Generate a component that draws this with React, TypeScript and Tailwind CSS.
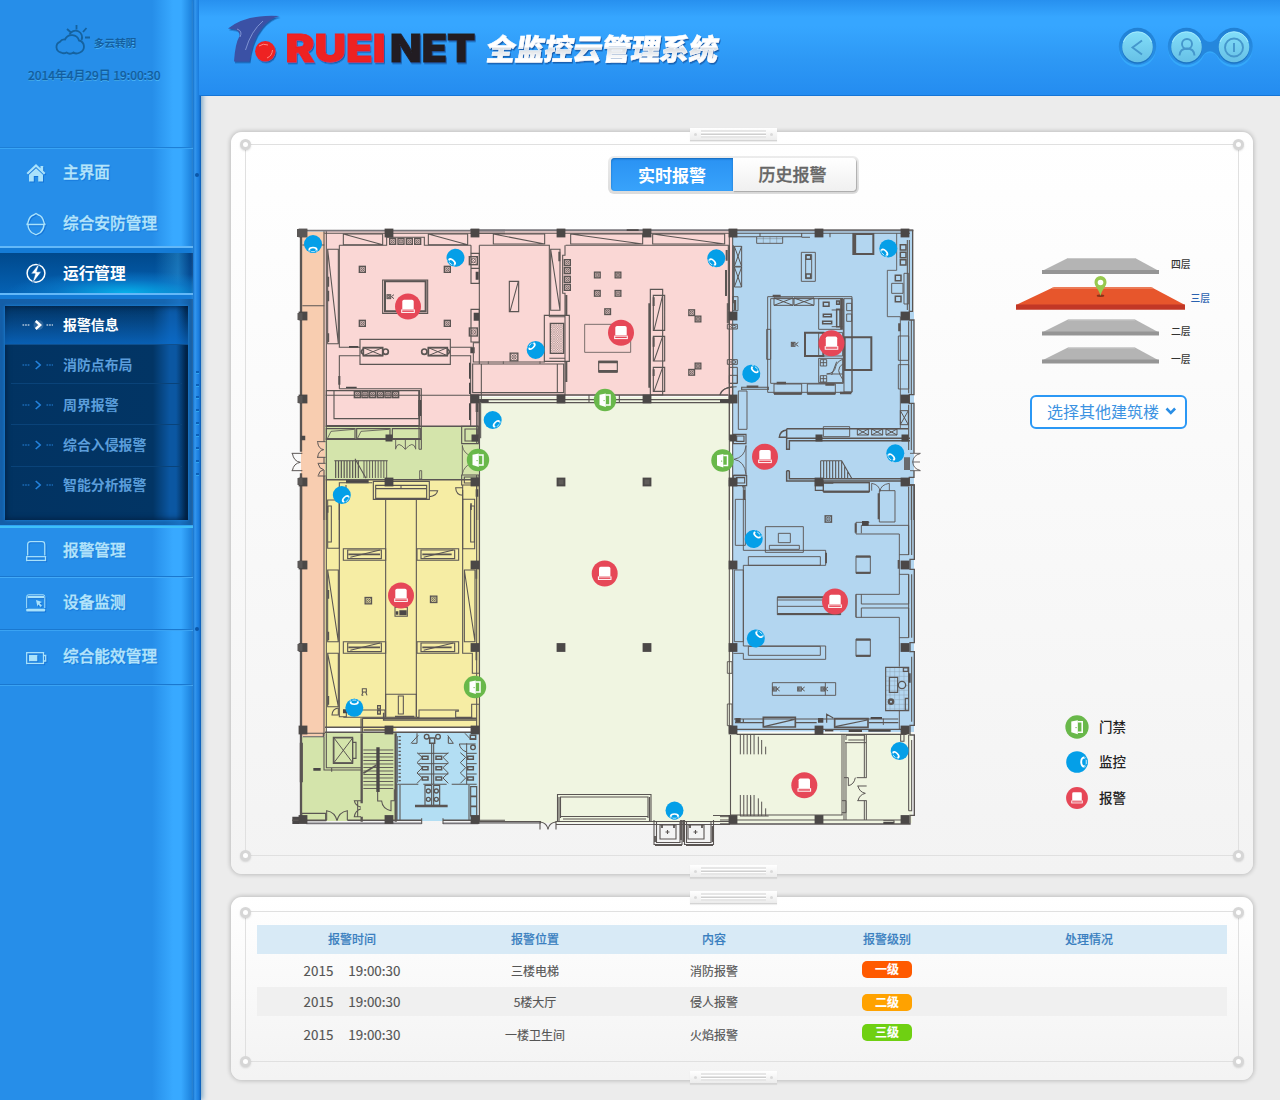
import React from "react";

type Box = [number, number, number, number];
type Mark = [number, number, number];

const INK = "#5a5553";

/* ---------- small drawing helpers for the floor plan ---------- */

function Boxes({ items, w = 3.4, fill = "none" }: { items: Box[]; w?: number; fill?: string }) {
  return (
    <path
      d={items.map(([x, y, a, b]) => `M${x} ${y}h${a}v${b}h${-a}z`).join("")}
      stroke={INK}
      strokeWidth={w}
      fill={fill}
    />
  );
}

function Crossed({ items }: { items: Box[] }) {
  return (
    <path
      d={items.map(([x, y, a, b]) => `M${x} ${y}h${a}v${b}h${-a}zl${a} ${b}M${x + a} ${y}l${-a} ${b}`).join("")}
      stroke={INK}
      strokeWidth={3}
      fill="none"
    />
  );
}

function Slashed({ items }: { items: Box[] }) {
  return (
    <path
      d={items.map(([x, y, a, b]) => `M${x} ${y}h${a}v${b}h${-a}zl${a} ${b}`).join("")}
      stroke={INK}
      strokeWidth={3.2}
      fill="none"
    />
  );
}

function Pots({ items }: { items: Mark[] }) {
  return (
    <g stroke={INK} fill="none">
      {items.map(([x, y, s], i) => (
        <g key={i}>
          <rect x={x - s / 2} y={y - s / 2} width={s} height={s} strokeWidth={4} />
          <circle cx={x} cy={y} r={s / 3.6} strokeWidth={2.4} />
          <path d={`M${x - s / 2} ${y - s / 2}l${s} ${s}M${x + s / 2} ${y - s / 2}l${-s} ${s}`} strokeWidth={1.6} />
        </g>
      ))}
    </g>
  );
}

function Solid({ items }: { items: Box[] }) {
  return <path d={items.map(([x, y, a, b]) => `M${x} ${y}h${a}v${b}h${-a}z`).join("")} fill="#4a4747" />;
}

function Line({ d, w = 3.2, c = INK }: { d: string; w?: number; c?: string }) {
  return <path d={d} stroke={c} strokeWidth={w} fill="none" />;
}

function bars(x0: number, x1: number, step: number, y0: number, y1: number) {
  let d = "";
  for (let x = x0; x <= x1; x += step) d += `M${x} ${y0}V${y1}`;
  return d;
}
function rungs(y0: number, y1: number, step: number, x0: number, x1: number) {
  let d = "";
  for (let y = y0; y <= y1; y += step) d += `M${x0} ${y}H${x1}`;
  return d;
}

function Cam({ x, y }: { x: number; y: number }) {
  return (
    <g stroke={INK} strokeWidth={3} fill="none">
      <rect x={x - 8} y={y - 6} width={11} height={12} />
      <rect x={x - 5} y={y - 3} width={4} height={6} />
      <path d={`M${x + 13} ${y - 6}l-8 6l8 6`} />
    </g>
  );
}

/* ---------- markers ---------- */

function Alarm({ x, y, s = 1 }: { x: number; y: number; s?: number }) {
  return (
    <g transform={`translate(${x} ${y}) scale(${s})`}>
      <circle r="13" fill="#e64757" />
      <path d="M-5.700 2.600V-5q0-1.700 1.700-1.700H4Q5.700-6.700 5.700-5V2.600Z" fill="#fff" />
      <rect x="-6.300" y="3.400" width="12.600" height="2.500" fill="none" stroke="#fff" strokeWidth="1" />
    </g>
  );
}

function Door({ x, y, s = 1 }: { x: number; y: number; s?: number }) {
  return (
    <g transform={`translate(${x} ${y}) scale(${s})`}>
      <circle r="11.200" fill="#69b84a" />
      <path d="M-5.500-5.200L.8-6.500V7L-5.500 5Z" fill="#fff" />
      <path d="M.8-5H5V5H.8" fill="none" stroke="#fff" strokeWidth="1.500" />
      <circle cx="-.9" cy=".6" r=".7" fill="#69b84a" />
    </g>
  );
}

function Eye({ x, y, a, s = 1 }: { x: number; y: number; a: number; s?: number }) {
  return (
    <g transform={`translate(${x} ${y}) rotate(${a}) scale(${s})`}>
      <circle r="9" fill="#049fe8" />
      <ellipse cy="5.700" rx="4.600" ry="3" fill="#fff" />
      <ellipse cy="6" rx="2.900" ry="1.700" fill="#049fe8" />
      <path d="M-4.600 5.700Q0 9.500 4.600 5.700L3 8.500Q0 9.500-3 8.500Z" fill="#049fe8" />
      <path d="M-1.800 7.700H1.800" stroke="#fff" strokeWidth=".7" />
    </g>
  );
}

const columnsX = [303, 389, 475, 561, 647, 733, 819, 905];
const columnRows: [number, number[]][] = [
  [233, columnsX],
  [316, [303, 733, 905]],
  [399, [303, 475, 561, 647, 733, 905]],
  [438, [303, 389, 475, 733, 819, 905]],
  [482, [303, 389, 475, 561, 647, 733, 819, 905]],
  [565, [303, 475, 733, 905]],
  [647.5, [303, 475, 561, 647, 733, 905]],
  [730, [303, 389, 475, 733, 819, 905]],
  [819.5, [303, 389, 475, 733, 819, 905]],
];

function FloorPlan() {
  return (
    <svg className="block h-[628px] w-[640px] shrink-0" viewBox="285 222 640 628">
      <defs>
        <pattern id="mesh" width="7" height="7" patternUnits="userSpaceOnUse">
          <path d="M0 0l7 7M7 0l-7 7" stroke={INK} strokeWidth="0.8" />
        </pattern>
      </defs>

      <rect x="301" y="232" width="24" height="504" fill="#f8cdb0" />
      <path d="M325 231H732V396H479V427H325Z" fill="#fad7d5" />
      <rect x="325" y="426" width="154" height="53" fill="#d4e4ab" />
      <rect x="325" y="479" width="154" height="252" fill="#f6eda4" />
      <rect x="301" y="737" width="95" height="84" fill="#d4e4ab" />
      <rect x="325" y="733" width="71" height="8" fill="#d4e4ab" />
      <rect x="396" y="733" width="82" height="88" fill="#b3def3" />
      <path d="M479 397H731V733H912V823H479Z" fill="#f0f5e1" />
      <path d="M732 231H912V312H914V732H732Z" fill="#b3d6f0" />

      {/* north-west: gallery, kitchen and stair lobby */}
      <g transform="translate(285 220) scale(.33333)">
        <Line w={5} c="#77757a" d="M45 32H660" />
        <Line d="M118 40H660M48 48V690M52 75H118M52 257H118M163 76H305V52H418V76H558M163 76V382H225M558 76V100M583 76V432" />
        <Line w={7} d="M48 48V695M48 760V900" />
        <Line d="M117 34V665M117 712V730M117 768V900M124 34V900" />
        <Slashed items={[[175, 42, 118, 32], [430, 42, 118, 32], [128, 88, 32, 283]]} />
        <Line w={5} d="M130 170v30M130 212v32M130 340v26" />
        <Pots items={[[323, 64, 18], [348, 64, 18], [373, 64, 18], [398, 64, 18], [232, 148, 18], [487, 148, 18], [232, 310, 18], [487, 310, 18], [565, 122, 24], [565, 336, 24]]} />
        <Boxes items={[[300, 184, 122, 90]]} w={6} />
        <Boxes items={[[293, 180, 135, 100], [558, 100, 25, 90], [558, 145, 25, 45], [558, 268, 25, 98], [225, 358, 271, 75]]} />
        <Solid items={[[566, 278, 16, 24], [572, 155, 9, 24], [556, 382, 13, 18], [160, 468, 6, 26], [183, 500, 32, 5], [192, 378, 28, 5], [552, 428, 6, 48], [552, 488, 6, 34], [552, 550, 6, 50], [400, 540, 9, 48], [572, 550, 8, 26], [183, 780, 68, 10], [572, 808, 8, 22]]} />
        <Cam x={314} y={230} />
        <Crossed items={[[235, 383, 58, 24], [430, 383, 57, 24]]} />
        <Boxes items={[[235, 383, 58, 24], [430, 383, 57, 24]]} w={5} />
        <circle cx="302" cy="395" r="8" stroke={INK} strokeWidth="5" fill="none" />
        <circle cx="418" cy="395" r="8" stroke={INK} strokeWidth="5" fill="none" />
        <path d="M235 387Q222 395 235 403M487 387Q500 395 487 403" stroke={INK} strokeWidth="5" fill="none" />
        <Line d="M163 506V407H225M496 407H557V619M497 382H562M163 506H409V688M402 512V688M122 526H583M583 368H565V426H583M402 688h8" />
        <Boxes items={[[124, 512, 280, 105], [147, 512, 255, 84]]} />
        <Pots items={[[217, 524, 18], [240, 524, 18], [263, 524, 18], [286, 524, 18], [309, 524, 18], [332, 524, 18]]} />
        <Line w={4.500} d="M122 619H580M122 779H580M122 658H408" />
        <Boxes items={[[124, 626, 86, 30], [215, 626, 100, 30], [322, 626, 84, 30]]} />
        <Line d="M128 654L138 634L208 628M218 654L228 634L312 628" w={2.500} />
        <Line d="M332 658V688M392 658V688M361 658V688M332 686Q338 660 361 688Q384 660 392 686M404 752H410V777H404Z" w={2.600} />
        <Line d={bars(152, 226, 8.500, 722, 774)} w={3.600} />
        <Line d={bars(237, 308, 8.500, 722, 774)} w={2.800} />
        <Line d="M148 722H308M210 716L243 775" />
        <Boxes items={[[530, 619, 50, 52], [540, 627, 36, 36], [530, 765, 52, 30], [538, 771, 38, 18]]} />
        <Line w={2.500} d="M532 675V765M532 678Q536 700 558 708M532 762Q536 740 558 730" />
        <Line d="M583 540V670M575 540V670M583 765V900M575 765V900" />
        <Line d="M163 900V788H262M183 795v28" />
        <Boxes items={[[265, 784, 168, 54], [272, 796, 153, 10], [272, 806, 153, 29]]} />
        <Line d="M348 796v10M433 830Q455 828 458 812H433M533 826Q513 824 512 803H533M533 795V900" />
        <Line d="M20 700H52M20 752H52M22 700Q26 724 46 727Q26 730 22 752" w={3} />
        <Line d="M96 665H122M96 712H122M98 667Q100 686 116 689Q100 692 98 712M98 730H122M98 768H122M100 732Q102 746 116 749Q102 752 100 766" w={3} />
      </g>

      {/* north centre: exhibition rooms */}
      <g transform="translate(470 220) scale(.33333)">
        <Line w={6} c="#77757a" d="M0 31H790" />
        <Line d="M0 40H780M28 76H238V290M287 76H775V310M285 76V106H278V220H285V525M34 432V540M262 432V518M28 426H225M238 290H285M238 415H285" />
        <Slashed items={[[70, 42, 154, 30], [302, 42, 216, 30], [548, 42, 216, 30], [242, 88, 28, 183]]} />
        <Pots items={[[292, 128, 18], [292, 152, 18], [292, 178, 18], [292, 202, 18], [382, 165, 17], [444, 165, 17], [382, 220, 17], [444, 220, 17], [413, 275, 17], [665, 278, 17], [684, 297, 17], [684, 438, 17], [665, 457, 17], [132, 411, 23]]} />
        <Boxes items={[[118, 184, 28, 91], [223, 286, 75, 138], [8, 432, 273, 86], [541, 208, 37, 317], [550, 226, 34, 105], [550, 349, 34, 74], [550, 442, 34, 72], [386, 424, 56, 32]]} />
        <Boxes items={[[344, 313, 138, 84]]} w={2.400} />
        <Boxes items={[[241, 310, 40, 90]]} fill="url(#mesh)" w={4} />
        <Line d="M120 275L145 184M552 331L578 226M552 423L578 349M552 514L578 442" />
        <Line w={8} d="M386 426H442M386 454H442" />
        <Line w={6} d="M538 250V503M289 225V285M289 425V486M768 150V228M770 90V122M776 250V270M268 95V124M551 232V258M551 352V380M551 448V468" />
        <Line w={2.500} d="M55 432v-8M100 432v-8M210 432v-8" />
        <Line w={4} d="M0 525H775M25 539H800M34 548H790" />
        <Line d="M357 525V548M448 525V548M750 525Q752 502 800 500M24 548V655M32 548V655M778 76V660M790 76V250" />
        <Solid items={[[28, 538, 28, 10], [750, 538, 28, 10], [470, 28, 36, 5]]} />
      </g>

      {/* north-east: offices */}
      <g transform="translate(720 220) scale(.33333)">
        <Line w={6} d="M25 31H580" c="#6b686a" />
        <Line d="M35 40H570M28 40V900M38 40V900M22 250V310M188 50H245V40M245 52H270M330 52V40M120 50V40M40 50H110" />
        <Line w={4} d="M578 30V274H568V300H582V524H568V550H582V700M582 752V772H568V795H582V900" />
        <Line d="M568 60V274M574 300V524M574 550V690M562 60V270M566 304V520M566 554V690M574 795V900" />
        <Line w={2.600} d="M530 40V151H502V290H541V626" />
        <Crossed items={[[43, 79, 22, 60], [43, 141, 22, 60], [162, 234, 57, 22], [222, 234, 60, 22], [541, 572, 24, 42], [412, 627, 33, 18], [455, 627, 33, 18], [498, 627, 33, 18]]} />
        <Line d="M110 56H188M130 50V70M150 50V70M170 50V70" w={1} />
        <Boxes items={[[244, 97, 42, 87], [110, 50, 78, 20], [257, 104, 18, 72], [38, 230, 16, 42], [552, 160, 14, 92], [515, 190, 34, 30], [143, 230, 253, 287], [152, 236, 218, 254], [296, 236, 72, 92], [372, 236, 24, 280], [380, 250, 15, 22], [380, 282, 15, 22], [296, 338, 72, 70], [296, 415, 72, 73], [140, 328, 12, 90], [162, 492, 83, 30], [262, 492, 84, 30], [55, 513, 26, 115], [535, 348, 31, 73], [535, 434, 31, 73], [310, 620, 79, 30]]} w={2.800} />
        <Boxes items={[[400, 42, 60, 60], [255, 338, 55, 70], [374, 352, 80, 98]]} w={6} />
        <Boxes items={[[541, 74, 17, 16], [541, 97, 17, 16], [541, 119, 17, 16], [526, 166, 17, 16], [526, 229, 17, 16], [310, 247, 17, 12], [310, 283, 24, 7], [308, 304, 27, 7], [350, 243, 8, 10], [350, 268, 10, 52], [258, 106, 14, 12], [258, 162, 14, 12]]} w={4.500} />
        <Line w={7} d="M162 521H245M262 521H346M158 228H182M170 489H198M316 494H344M360 519H394M405 42v58M364 236V328M538 310v24M45 240v30M80 500H115" />
        <Line w={2.800} d="M301 419h19v19h-19zM301 428h19M310 419v19M301 467h19v19h-19zM301 476h19M310 467v19M368 418Q350 425 347 440Q344 460 320 462H368M368 432Q356 440 356 452Q358 464 368 478M350 425L335 465M335 270H368M335 320H368" />
        <Cam x={222} y={373} />
        <Line d="M65 502H145M65 508H145M65 500v10M145 500v10M0 525Q8 502 38 500V525" />
        <Boxes items={[[22, 313, 30, 14], [22, 419, 30, 14], [28, 442, 24, 48], [28, 466, 24, 24]]} w={3} />
        <ellipse cx="40" cy="320" rx="8" ry="4" stroke={INK} strokeWidth="3" fill="none" />
        <ellipse cx="40" cy="426" rx="8" ry="4" stroke={INK} strokeWidth="3" fill="none" />
        <Line w={4.500} d="M200 626H565M200 655H570M200 626V688H208V662H570M200 752V783H570M208 752V776H570M200 752H208M178 652Q180 632 200 630V652Z" />
        <Line d={`M302 722H365L395 775${bars(302, 366, 9, 722, 774)}M374 738V774M383 755V774`} />
        <Line w={5} d="M555 712V750M561 712V750M567 712V750" />
        <Line d="M570 700H602M570 752H602M600 701Q580 706 578 726Q580 746 600 751M578 726L600 726" w={2.600} />
        <Boxes items={[[40, 643, 38, 28], [50, 648, 22, 16], [40, 767, 40, 30], [50, 773, 24, 16], [286, 783, 24, 28], [310, 788, 138, 26]]} />
        <Line w={2.600} d="M78 675V765M78 678Q74 712 42 718Q74 724 78 762M40 765H80M455 812V790Q478 794 480 814Q482 794 508 790V812" />
        <Line d="M66 800H75V840" />
      </g>

      {/* south-east: halls */}
      <g transform="translate(720 480) scale(.33333)">
        <Line d="M28 0V760M38 0V760" />
        <Line w={4} d="M568 0V15H583V238H570V268H583V488H570V515H583V736H570V765H583V1006H570V1032H0" />
        <Line d="M562 15H575V225M566 20V225M575 283V473M566 283V473M575 530V725M575 780V992H566M566 765V992" />
        <Boxes items={[[310, 8, 138, 28], [478, 32, 47, 94], [46, 58, 30, 138], [136, 140, 114, 77], [175, 160, 36, 28], [148, 196, 90, 12], [85, 230, 216, 26], [85, 499, 216, 27], [43, 270, 27, 215], [172, 352, 190, 52], [408, 228, 43, 52], [408, 477, 43, 52], [157, 608, 190, 38], [22, 672, 14, 65], [22, 545, 14, 35]]} w={2.800} />
        <Pots items={[[325, 117, 19]]} />
        <Line w={6} d="M476 40V118M408 230H451M408 278H451M408 479H451M408 527H451M172 352H330M172 402H362M407 130V158M318 218V250M536 240V266M73 30V60M310 35H448M310 8H340" />
        <Line d="M70 20V211H317V256H70V498H317V538H70V520H40M172 379H330M172 360H330M316 608V646M448 127H408V162H538V343H408V412H538V560M424 160V136H566V224H538M424 343V372H566V283H538M424 412V384H566V473H538M538 690V748M490 735V716M408 343V412" w={2.800} />
        <Solid items={[[426, 123, 20, 14], [46, 714, 16, 14], [294, 714, 16, 14], [564, 580, 8, 28], [386, 748, 40, 8], [445, 748, 67, 7], [315, 748, 25, 8], [452, 711, 34, 6], [490, 1026, 32, 6]]} />
        <Cam x={166} y={627} />
        <Cam x={241} y={627} />
        <Cam x={311} y={627} />
        <path d={bars(510, 560, 14, 562, 692) + rungs(575, 690, 14, 497, 566)} stroke="#8ea3b2" strokeWidth="1.400" />
        <Boxes items={[[497, 562, 69, 130], [508, 592, 25, 45], [550, 564, 14, 10], [556, 655, 10, 36]]} w={3.500} />
        <circle cx="546" cy="615" r="11" stroke={INK} strokeWidth="4" fill="#b3d6f0" />
        <circle cx="513" cy="665" r="10" fill={INK} />
        <circle cx="513" cy="665" r="3" fill="#b3d6f0" />
        <Boxes items={[[130, 712, 96, 29], [344, 716, 100, 26]]} w={5} />
        <Line d="M132 740L224 718M346 740L442 720M42 717H535M70 728H130M228 728H290M45 728H70V717M320 728V703L340 714M446 728H535" w={3.600} />
        <Line w={4} d="M50 748H560M50 763H560" />
        <Line w={3} c="#fff" d="M52 756H285M312 756H360" />
        <Line w={3} d={bars(61, 103, 10.300, 762, 823) + "M115 770V823M125 780V823M137 800V823" + bars(61, 103, 10.300, 945, 1008) + "M92 950V1008M115 955V1008M125 965V1008M137 985V1008M60 1008H146"} />
        <Line d="M366 762V1005M372 762V1020M378 788V1020M30 1005H368M0 1010H45M0 1020H560M375 788H438M378 780V766H434V780H385M433 762V893M439 762V893M372 893H385M410 893H440M385 893V917Q402 914 406 893M412 918H440M412 962H440M433 962V1020M439 962V1020M414 918Q418 936 436 940Q418 944 414 962M366 962H378V998H366" w={3} />
        <Line d="M542 765V784H552V765M490 1022H522V1032" />
      </g>

      {/* south-west: classrooms, lift, stair and washrooms */}
      <g transform="translate(285 470) scale(.33333)">
        <rect x="122" y="774" width="106" height="10" fill="#fff" />
        <rect x="334" y="774" width="225" height="9" fill="#fff" />
        <Line w={7} d="M48 20V1045" />
        <Line d="M117 0V790M124 20V790M575 20V780M583 20V610M583 705V1050M163 88V740H184V720M533 60V550H562V610H583M560 745V703H583M302 88V742M394 88V742" />
        <Boxes items={[[128, 90, 35, 145], [128, 108, 11, 108], [533, 88, 36, 148], [557, 108, 11, 108], [175, 236, 127, 35], [396, 236, 125, 35], [175, 515, 127, 35], [396, 515, 125, 35], [330, 412, 37, 27], [302, 673, 92, 69], [340, 678, 15, 54], [232, 656, 12, 10]]} w={3.200} />
        <Slashed items={[[128, 300, 32, 215], [128, 550, 32, 160], [538, 300, 32, 215]]} />
        <Boxes items={[[188, 240, 101, 26], [408, 240, 101, 26], [188, 519, 101, 26], [408, 519, 101, 26]]} />
        <Line d="M196 262L285 240M416 262L505 240M196 541L285 519M416 541L505 519" />
        <Line w={5} d="M190 253H285M412 253H500M190 532H285M412 532H500M130 360v26M130 485v26M130 678v26M574 300v26M574 545v26M558 100v20M330 740H388M128 108v20" />
        <Pots items={[[250, 392, 19], [446, 388, 19]]} />
        <Solid items={[[343, 421, 22, 15], [332, 424, 8, 10], [174, 718, 12, 12], [85, 894, 22, 8]]} />
        <Boxes items={[[278, 707, 8, 10], [278, 722, 8, 10]]} w={4} />
        <Line d="M234 666l-4 10M242 666l4 10M230 676h5M141 735Q142 716 160 714V735ZM186 720H300V742H175M396 742H402V720H520V724H512V742H560V745H396" />
        <Line w={4.500} d="M232 745H575M232 745V785M296 728V750H575M120 772H575M120 787H580M236 780H310" />
        <Line d="M228 745V785M46 790H120M53 800H115V790" />
        <Crossed items={[[147, 804, 56, 74]]} />
        <Boxes items={[[145, 802, 58, 78], [203, 817, 10, 48], [50, 1030, 72, 22], [46, 820, 6, 115]]} />
        <Line d="M117 790V900H228M124 790V893H228M140 893V905" />
        <Line w={7} d="M230 790V1000M332 790V1055M230 1040V1055" />
        <Line d={rungs(840, 958, 10.500, 235, 325)} w={2.800} />
        <Solid items={[[274, 832, 10, 134], [34, 1040, 30, 20], [22, 1040, 20, 22]]} />
        <Line w={5} d="M235 910L274 886" />
        <Line d="M278 964V993H290Q292 1016 318 1022V992H328V958M228 992H208Q210 1006 228 1012M228 1040H208Q210 1022 228 1016M218 992V1040" />
        <Line d="M125 1050V1022Q150 1026 156 1052Q162 1026 187 1022V1050" />
        <Line w={4.500} d="M22 1051H125M187 1051H410M474 1051H580" />
        <Line w={5} c="#77757a" d="M64 1060H410M474 1060H580" />
        <Line d="M410 1045V1062M474 1045V1062M580 1051H660" />
        <Line w={6} c="#8a8889" d="M580 1058H768" />
        <Line d="M345 945V1050M552 945V1050M333 943H400M415 943H485M500 943H575M440 820V943M446 820V943M396 790V820M490 800V820M336 945V1050" />
        <Line w={3} d={rungs(850, 912, 31, 400, 490) + rungs(850, 912, 31, 545, 575) + "M396 848L412 862L396 878L412 893L396 909L412 924L396 940M490 848L474 862L490 878L474 893L490 909L474 924L490 940M526 848L542 862L526 878L542 893L526 909L542 924L526 940M545 820V943M378 820L400 796M380 820H396M505 820L488 796M505 820H490M523 822H572M523 822Q526 840 545 846M540 790L555 806H572"} />
        <Boxes items={[[412, 859, 17, 9], [412, 890, 17, 9], [412, 921, 17, 9], [453, 859, 17, 9], [453, 890, 17, 9], [453, 921, 17, 9], [548, 859, 17, 9], [548, 890, 17, 9], [548, 921, 17, 9], [434, 804, 15, 16], [556, 796, 16, 12]]} w={4.500} />
        <Line w={4} d="M337 798V938" c="#6d7a82" />
        <path d="M344 798V938" stroke={INK} strokeWidth="7" strokeDasharray="4 7" />
        <Boxes items={[[420, 946, 20, 60], [446, 946, 18, 60], [557, 950, 18, 28], [557, 980, 18, 28], [557, 1010, 18, 28]]} />
        <g stroke={INK} strokeWidth="4" fill="none">
          <circle cx="430" cy="963" r="6" />
          <circle cx="430" cy="988" r="6" />
          <circle cx="454" cy="963" r="6" />
          <circle cx="454" cy="988" r="6" />
          <circle cx="425" cy="800" r="7" />
          <circle cx="459" cy="800" r="7" />
          <circle cx="564" cy="832" r="7" />
        </g>
        <Line w={7} d="M390 1008H488" />
      </g>

      {/* south entrance and outdoor lifts */}
      <g stroke={INK} fill="none" strokeWidth="1.100">
        <path d="M480 821.500H541M556 821.500H730M556 824.500H730M557.500 822V794.500H651V822M560.500 818V797H648V818M559 797V821M649.500 797V821M561 816.500H648M563 819H646" />
        <path d="M540 821V829.500M556 821V829.500M540.500 822Q547 823 548 829.500Q549 823 555.500 822M479.500 400V822M730.500 735V815M713 815.500H730" />
        <path d="M654 820V844.500H682V820M684.500 820V844.500H713.500V820M656.500 822V842.500H680V822M686.500 822V842.500H711V822M660 825h16v14h-16zM688 825h16v14h-16z" />
        <path d="M655 845H682M686 845H713M655 842V836M712.500 842V826M662 825v3M674 825v3M690 825v3M702 825v3M681 820v20M683.500 820v22" strokeWidth="1.800" />
        <path d="M667.500 830v4M665.500 832h4M695.500 830v4M693.500 832h4" />
      </g>

      {/* structural columns */}
      {columnRows.map(([y, xs]) =>
        xs.map((x) => {
          const s = y === 438 ? (x === 303 ? 4.5 : 7) : 8.8;
          return <rect key={`${x}-${y}`} x={x - s / 2} y={y - s / 2} width={s} height={s} fill="#4b4847" />;
        }),
      )}
      <g fill="#5f5c59">
        {[561, 647].map((x) => (
          <rect key={x} x={x - 2.5} y={479.5} width="5" height="5" />
        ))}
      </g>
      <path d="M297 229h10v8h-10zM297.500 313h5v7h-5zM297.500 396h5v7h-5zM297.500 478h5v7h-5zM297.500 561h5v7h-5zM297.500 644h5v7h-5z" fill="#5a5756" />

      <Alarm x={408} y={306.500} />
      <Alarm x={621} y={332.700} />
      <Alarm x={831.500} y={343.300} />
      <Alarm x={765} y={456.700} />
      <Alarm x={604.700} y={573.500} />
      <Alarm x={401} y={595.500} />
      <Alarm x={835} y={601.500} />
      <Alarm x={804.300} y={785.300} />
      <Door x={605} y={400} />
      <Door x={478} y={460} />
      <Door x={722.500} y={460.500} />
      <Door x={475} y={687} />
      <Eye x={313} y={244} a={0} />
      <Eye x={455.500} y={257.700} a={40} />
      <Eye x={716.300} y={258.300} a={45} />
      <Eye x={888.300} y={248.500} a={45} />
      <Eye x={535.700} y={350} a={135} />
      <Eye x={751.300} y={373.700} a={220} />
      <Eye x={492.700} y={420} a={-45} />
      <Eye x={895.300} y={453.300} a={45} />
      <Eye x={341.800} y={495} a={-45} />
      <Eye x={753.700} y={539} a={220} />
      <Eye x={755.800} y={638.500} a={220} />
      <Eye x={354.300} y={707.800} a={180} />
      <Eye x={899.700} y={751} a={45} />
      <Eye x={674.500} y={810.500} a={0} />
    </svg>
  );
}

/* ---------- panel chrome ---------- */

function Screw({ pos }: { pos: string }) {
  return (
    <span
      className={`absolute h-[11px] w-[11px] rounded-full border-[3px] border-[#d6d6d6] bg-white shadow-[0_1px_2px_#0002] ${pos}`}
    />
  );
}

function Clip({ pos }: { pos: string }) {
  return (
    <span
      className={`absolute left-[459px] flex h-[13px] w-[87px] items-center justify-between border-b border-[#d4d4d4] bg-gradient-to-b from-white to-[#ececec] px-1 shadow-[0_1px_1px_#0001] ${pos}`}
    >
      <i className="h-[3px] w-[3px] rounded-full bg-[#dadada]" />
      <i className="flex h-[8px] w-[65px] flex-col justify-between bg-[#e6e6e6] py-[2px]">
        <b className="h-px bg-white" />
        <b className="h-px bg-[#cfcfcf]" />
        <b className="h-px bg-white" />
      </i>
      <i className="h-[3px] w-[3px] rounded-full bg-[#dadada]" />
    </span>
  );
}

function Panel({ className, low = false, children }: { className: string; low?: boolean; children: React.ReactNode }) {
  return (
    <section
      className={`relative w-[1022px] rounded-[11px] bg-gradient-to-b from-white to-[#f3f3f3] shadow-[0_0_4px_1px_#0003] ${className}`}
    >
      <span
        className={`pointer-events-none absolute right-[14px] bottom-[18px] left-[14px] border border-[#e0e0e0] ${low ? "top-[14px]" : "top-[12px]"}`}
      />
      <Screw pos={low ? "left-[9px] top-[10px]" : "left-[9px] top-[7px]"} />
      <Screw pos={low ? "right-[9px] top-[10px]" : "right-[9px] top-[7px]"} />
      <Screw pos="left-[9px] bottom-[13px]" />
      <Screw pos="right-[9px] bottom-[13px]" />
      <Clip pos={low ? "-top-[6px]" : "-top-[4px]"} />
      <Clip pos="-bottom-[4px]" />
      {children}
    </section>
  );
}

/* ---------- sidebar ---------- */

const itemIcon = "h-[24px] w-[24px] shrink-0 drop-shadow-[1px_1px_0_#1273d8]";

const HomeIcon = () => (
  <svg className={itemIcon} viewBox="0 0 24 24" fill="#a9e2fb">
    <path d="M12 3L2.500 12l1.500 1.500L12 6l8 7.500 1.500-1.500-2.300-2.200V5h-2.700v2.200Z" />
    <path d="M12 7.300L5 13.800V20.500h4.800V15h4.400v5.500H19V13.800Z" />
  </svg>
);
const HelmetIcon = () => (
  <svg className={itemIcon} viewBox="0 0 24 24" fill="none" stroke="#a9e2fb" strokeWidth="1.400">
    <path d="M2.500 12.500Q4 12 4 10.500Q5.500 4 9.500 3L12 1.500L14.500 3Q18.500 4 20 10.500Q20 12 21.500 12.500Z" />
    <path d="M4 12.500Q4 17 7.500 20.500L12 22.800L16.500 20.500Q20 17 20 12.500" />
  </svg>
);
const BoltIcon = () => (
  <svg className="h-[24px] w-[24px] shrink-0" viewBox="0 0 24 24">
    <circle cx="12" cy="12.300" r="8.900" fill="none" stroke="#fff" strokeWidth="1.500" />
    <path d="M15.800 1.500L7 12.800H11.200L8 23L17.300 10.800H12.800Z" fill="#fff" stroke="#0a5aab" strokeWidth=".6" />
  </svg>
);
const BellIcon = () => (
  <svg className={itemIcon} viewBox="0 0 24 24" fill="none" stroke="#a9e2fb" strokeWidth="1.300">
    <path d="M3.700 16.500V5.500Q3.700 2.700 6.500 2.700H18Q20.800 2.700 20.800 5.500V16.500" />
    <rect x="2.700" y="17.700" width="18.800" height="3.800" />
  </svg>
);
const ScreenIcon = () => (
  <svg className={itemIcon} viewBox="0 0 24 24" fill="none" stroke="#a9e2fb" strokeWidth="1">
    <path d="M2.700 17V5.500Q2.700 3.800 4.500 3.800H19Q20.800 3.800 20.800 5.500V17" />
    <path d="M3.500 6H20" strokeWidth="2.200" />
    <rect x="2.200" y="17.700" width="19" height="2.900" rx="1" fill="#a9e2fb" stroke="none" />
    <path d="M12 9l6 2-2.300 1.200 2.300 2.500-1.300 1.200-2.400-2.500L13.400 15.500Z" fill="#a9e2fb" stroke="none" />
  </svg>
);
const BatteryIcon = () => (
  <svg className={itemIcon} viewBox="0 0 24 24" fill="none" stroke="#a9e2fb" strokeWidth="1.300">
    <rect x="2.700" y="7.700" width="16.800" height="10.800" />
    <rect x="5" y="10" width="8.300" height="6.200" fill="#a9e2fb" stroke="none" />
    <path d="M20 10.500H21.700V16H20" />
  </svg>
);

function Item({ icon, label, className }: { icon: React.ReactNode; label: string; className: string }) {
  return (
    <a
      className={`flex shrink-0 items-center gap-[15px] pl-[24px] text-[15.700px] leading-none font-medium whitespace-nowrap text-[#b3e4fb] [-webkit-text-stroke:.35px_#b3e4fb] [text-shadow:1px_1px_1px_#1273d8] ${className}`}
    >
      {icon}
      <span className="pb-[2px]">{label}</span>
    </a>
  );
}

function SubItem({ label, className, active = false }: { label: string; className: string; active?: boolean }) {
  const c = active ? "#ffffff" : "#2482dc";
  return (
    <a
      className={`flex shrink-0 items-center pl-[17px] text-[13.900px] leading-none font-bold whitespace-nowrap ${active ? "text-white" : "text-[#5b9edb]"} ${className}`}
    >
      <svg className="mr-[10px] h-[14px] w-[31px]" viewBox="0 0 31 14">
        <path d="M.5 7h7M24.500 7h7" stroke={c} strokeWidth="1.200" strokeDasharray="1.700 .9" />
        {active && <circle cx="16.500" cy="7" r="5" fill="#fff" opacity=".16" />}
        <path d="M13.700 3l4.500 4l-4.500 4" fill="none" stroke={c} strokeWidth={active ? 2.400 : 1.600} />
      </svg>
      {label}
    </a>
  );
}

function Sidebar() {
  return (
    <aside className="flex h-[1100px] w-[201px] shrink-0">
      <nav className="relative flex w-[193px] flex-col bg-[linear-gradient(90deg,#268ee9_0px,#268ee9_152px,#38a9ff_173px,#38a9ff_181px,#1f86e0_191px,#1777cf_193px)]">
        <div className="flex h-[149px] shrink-0 flex-col border-b border-[#39a5f5] pt-[24px] font-medium text-[#135e9f] shadow-[inset_0_-1px_0_#1d7fd6] [text-shadow:0_1px_0_#4cb8fb] [-webkit-text-stroke:.25px_#135e9f]">
          <div className="flex items-center pl-[53px] text-[10.600px] leading-none">
            <svg className="mr-[4px] h-[33px] w-[37px]" viewBox="0 0 37 33" fill="none" stroke="#15629f" strokeWidth="1.800">
              <path d="M8 28.500A5.600 5.600 0 0 1 7 17.800A5 5 0 0 1 12 15.500A7.500 7.500 0 0 1 26 16.500A6.300 6.300 0 0 1 27 28.500Q23 30.500 20.500 28.500Q17 31 13.500 28.500Q11 30 8 28.500Z" />
              <path d="M16.500 10.500A6.600 6.600 0 1 1 28.500 16" />
              <path d="M23.500 1v4.500M14 5l4 3.500M33.500 4l-3.500 4M32 13.500h5" />
            </svg>
            <span className="pt-[5px]">多云转阴</span>
          </div>
          <div className="pt-[11px] pl-[28px] text-[12px] leading-[14px] tracking-[-.12px] whitespace-nowrap">2014年4月29日 19:00:30</div>
        </div>
        <Item icon={<HomeIcon />} label="主界面" className="h-[49px] pb-[1px]" />
        <Item icon={<HelmetIcon />} label="综合安防管理" className="h-[48px] pt-[3px]" />
        <div className="shrink-0 border-t-2 border-[#63b8f8] bg-[#147bd6] pt-[5px]">
          <div className="flex h-[40px] items-center gap-[15px] bg-[radial-gradient(ellipse_120px_22px_at_65%_100%,#06b0ea_0%,#0a7fcf99_60%,transparent_100%),linear-gradient(90deg,#0000_155px,#3aa9e866_178px,#00206055_192px),linear-gradient(#00498c,#0561b3)] pl-[24px] text-[15.700px] leading-none font-bold text-white">
            <BoltIcon />
            <span className="pb-[1px]">运行管理</span>
          </div>
          <div className="h-[6px] border-t-2 border-[#63b8f8]" />
        </div>
        <div className="flex h-[227px] shrink-0 bg-[linear-gradient(90deg,#145ea8,#1565b0_85%,#1a70c0_93%,#125a9f)] px-[5px] pt-[7px] shadow-[inset_0_-1px_0_#2fa4f4]">
          <div className="flex h-[214px] w-[185px] flex-col bg-[linear-gradient(90deg,#023362_0px,#023565_148px,#0b57a2_165px,#0b57a2_171px,#01284f_181px)] shadow-[0_0_3px_#1d86dd,inset_0_0_6px_#001a3a]">
            <SubItem active label="报警信息" className="h-[39px] border-b border-[#0f4f8d] bg-gradient-to-b from-[#0b6fd000] to-[#0b6fd0bb]" />
            <SubItem label="消防点布局" className="mx-[6px] h-[39px] border-b border-[#0a4379] pt-[1px] !pl-[11px]" />
            <SubItem label="周界报警" className="mx-[6px] h-[41px] border-b border-[#0a4379] pt-[1px] !pl-[11px]" />
            <SubItem label="综合入侵报警" className="mx-[6px] h-[42px] border-b border-[#0a4379] pb-[2px] !pl-[11px]" />
            <SubItem label="智能分析报警" className="mx-[6px] h-[36px] !pl-[11px]" />
          </div>
        </div>
        <Item icon={<BellIcon />} label="报警管理" className="h-[52px] border-b border-[#43aaf7] pb-[2px] shadow-[inset_0_2px_0_#3fc0f8,inset_0_-1px_0_#1a78cf]" />
        <Item icon={<ScreenIcon />} label="设备监测" className="h-[53px] border-b border-[#3aa3f3] pb-[3px] shadow-[inset_0_-1px_0_#1a78cf]" />
        <Item icon={<BatteryIcon />} label="综合能效管理" className="h-[55px] border-b border-[#3aa3f3] pb-[3px] shadow-[inset_0_-1px_0_#1a78cf]" />
      </nav>
      <div className="relative w-[8px] bg-[linear-gradient(90deg,#1472cc_0px,#3597ee_2px,#2388e6_4px,#1a7bdc_6px,#0a5cb4_8px)] shadow-[2px_0_5px_#7fa9c8]">
        <i className="absolute top-[173px] left-[2px] h-[4px] w-[4px] rounded-full bg-[#0b57a8]" />
        <i className="absolute top-[627px] left-[2px] h-[4px] w-[4px] rounded-full bg-[#0b57a8]" />
        <div className="absolute top-[371px] left-[3px] flex flex-col gap-[9.700px]">
          {[0, 1, 2, 3, 4, 5, 6, 7, 8].map((n) => (
            <i key={n} className="h-[3px] w-[3px] border-b border-[#2ea5f0] bg-[#0c60b8]" />
          ))}
        </div>
      </div>
    </aside>
  );
}

/* ---------- header ---------- */

function Logo() {
  return (
    <svg className="block h-[70px] w-[510px] overflow-visible" viewBox="220 0 510 70">
      <defs>
        <linearGradient id="silver" x1="0" y1="0" x2="0" y2="1">
          <stop offset="0" stopColor="#ffffff" />
          <stop offset=".5" stopColor="#ffffff" />
          <stop offset=".55" stopColor="#d9dde2" />
          <stop offset=".8" stopColor="#ffffff" />
        </linearGradient>
        <filter id="drop" x="-5%" y="-10%" width="110%" height="130%">
          <feDropShadow dx="1" dy="1.500" stdDeviation=".7" floodColor="#0b4a94" floodOpacity=".75" />
        </filter>
      </defs>
      <g filter="url(#drop)">
        <path d="M228 28.500Q246 14 279.500 16Q270 18 262 28Q252 40 249.500 61.500H234Q235 44 239.500 36Q240 31 235 29.500Z" fill="#3b51a5" />
        <path d="M263 21Q251 31 245.500 50" fill="none" stroke="#8fa2dd" strokeWidth="1" opacity=".8" />
        <path d="M237 29Q243 31 240 37" fill="none" stroke="#8fa2dd" strokeWidth="1" opacity=".8" />
        <circle cx="265.300" cy="51.300" r="10.200" fill="#ee2024" />
        <path d="M259 46Q263 43 268 45M272.500 50Q272 56 267 58" fill="none" stroke="#ff8a80" strokeWidth="1" />
        <g fontFamily="Inter, 'Liberation Sans', sans-serif" fontSize="38" fontWeight="900" strokeWidth=".8">
          <text x="285.500" y="61.500" fill="#ee2024" stroke="#ee2024" textLength="100" lengthAdjust="spacingAndGlyphs">
            RUEI
          </text>
          <text x="390" y="61.500" fill="#231f20" stroke="#231f20" textLength="85.500" lengthAdjust="spacingAndGlyphs">
            NET
          </text>
        </g>
        <text
          transform="translate(485 59.500) skewX(-9)"
          fontFamily="'Noto Sans CJK SC', sans-serif"
          fontSize="29.300"
          fontWeight="900"
          fill="url(#silver)"
          stroke="#fff"
          strokeWidth=".5"
          textLength="232"
        >
          全监控云管理系统
        </text>
      </g>
    </svg>
  );
}

function HeaderButtons() {
  return (
    <svg className="block h-[46px] w-[146px]" viewBox="1114 24 146 46">
      <defs>
        <linearGradient id="knob" x1="0" y1="0" x2="0" y2="1">
          <stop offset="0" stopColor="#82def9" />
          <stop offset="1" stopColor="#66c0e6" />
        </linearGradient>
        <linearGradient id="well" x1="0" y1="0" x2="0" y2="1">
          <stop offset="0" stopColor="#2080d4" />
          <stop offset="1" stopColor="#2b93ea" />
        </linearGradient>
      </defs>
      <g fill="#35a9fb" transform="translate(0 1.800)">
        <circle cx="1137.500" cy="47" r="18.500" />
        <circle cx="1186.500" cy="47" r="18.500" />
        <circle cx="1234" cy="47" r="18.500" />
        <path d="M1200 36Q1210 48 1220 36V57Q1210 45 1200 57Z" />
      </g>
      <g fill="url(#well)">
        <circle cx="1137.500" cy="46.500" r="18.700" />
        <circle cx="1186.500" cy="46.500" r="18.700" />
        <circle cx="1234" cy="46.500" r="18.700" />
      </g>
      <path d="M1200 34Q1210 50 1220 34V59Q1210 43.500 1200 59Z" fill="#2587dd" />
      {[1137.500, 1186.500, 1234].map((x) => (
        <g key={x}>
          <circle cx={x} cy={48.500} r="15.300" fill="#1567b4" opacity=".7" />
          <circle cx={x} cy={47} r="15.300" fill="url(#knob)" />
          <path d={`M${x - 14} 42A14.700 14.700 0 0 1 ${x + 14} 42`} fill="none" stroke="#a5ecff" strokeWidth="1" />
        </g>
      ))}
      <g fill="none" stroke="#4597cc" strokeWidth="1.900">
        <path d="M1142 40.500l-9.500 7l9.500 7" />
        <circle cx="1187" cy="44" r="5" />
        <path d="M1179.500 55.500Q1180 48.500 1187 48.500Q1194 48.500 1194.500 55.500" />
        <circle cx="1234" cy="47.500" r="9" />
        <path d="M1234 43v9" />
      </g>
    </svg>
  );
}

/* ---------- right column ---------- */

function FloorStack() {
  const slab = (y: number) => (
    <g key={y}>
      <path d={`M1068 ${y}H1135L1159 ${y + 13}H1042Z`} fill="#b4b4b4" />
      <path d={`M1068 ${y + 0.5}H1135`} stroke="#c8c8c8" />
      <path d={`M1042 ${y + 12}H1159V${y + 16}H1042Z`} fill="#959595" />
    </g>
  );
  return (
    <svg
      className="block h-[120px] w-[215px]"
      viewBox="1005 250 215 120"
      fontFamily="'Noto Sans CJK SC', sans-serif"
      fontSize="9.800"
      fontWeight="500"
      fill="#333"
    >
      {slab(258)}
      {slab(319.5)}
      {slab(347.5)}
      <path d="M1054 287H1151L1185 305H1016Z" fill="#e7562c" />
      <path d="M1052 288H1153" stroke="#f0a082" strokeWidth="1" />
      <path d="M1016 304.500H1185V309.700H1016Z" fill="#c23726" />
      <ellipse cx="1100.500" cy="295.800" rx="3.800" ry="1.200" fill="#8a3218" />
      <path d="M1100.500 296C1099 289 1094.500 287 1094.500 282A6 6 0 0 1 1106.500 282C1106.500 287 1102 289 1100.500 296Z" fill="#97c94f" />
      <circle cx="1100.500" cy="282.500" r="2.800" fill="#fff" />
      <text x="1171" y="268">四层</text>
      <text x="1190.500" y="302" fill="#2a62b0">三层</text>
      <text x="1171" y="335">二层</text>
      <text x="1171" y="363">一层</text>
    </svg>
  );
}

function Legend() {
  const rows: [React.ReactNode, string, string][] = [
    [<Door key="d" x={12} y={12} s={1.04} />, "门禁", "h-[24px]"],
    [<Eye key="e" x={12} y={12} a={-90} s={1.2} />, "监控", "mt-[11px] h-[24px]"],
    [<Alarm key="a" x={12} y={12} s={0.84} />, "报警", "mt-[12px] h-[24px]"],
  ];
  return (
    <div className="ml-[140px] flex flex-col text-[13.500px] leading-none font-medium text-[#222]">
      {rows.map(([icon, label, cls]) => (
        <div key={label} className={`flex items-center gap-[10px] ${cls}`}>
          <svg className="h-[24px] w-[24px]" viewBox="0 0 24 24">
            {icon}
          </svg>
          {label}
        </div>
      ))}
    </div>
  );
}

/* ---------- alarm table ---------- */

const cols = "grid grid-cols-[190px_176px_182px_164px_240px_18px] items-center justify-items-center";

const alarms = [
  { place: "三楼电梯", what: "消防报警", level: "一级", tone: "bg-[#ff5a00]", row: "h-[33px]", lift: "mb-[2px]" },
  { place: "5楼大厅", what: "侵人报警", level: "二级", tone: "bg-[#ffa200]", row: "h-[29px] bg-[#f0f0f0]", lift: "mt-[2px]" },
  { place: "一楼卫生间", what: "火焰报警", level: "三级", tone: "bg-[#6fd012]", row: "h-[37px]", lift: "mb-[4px]" },
];

function AlarmTable() {
  return (
    <div className="ml-[26px] w-[970px] pt-[28px] text-[12px] leading-none text-[#555] [-webkit-text-stroke:.15px]">
      <div className={`${cols} h-[29px] bg-[#d8eaf6] pb-[2px] font-medium text-[#3a7fc0]`}>
        <span>报警时间</span>
        <span>报警位置</span>
        <span>内容</span>
        <span>报警级别</span>
        <span>处理情况</span>
      </div>
      {alarms.map((a) => (
        <div key={a.level} className={`${cols} ${a.row}`}>
          <span className="flex gap-[15px] text-[13.400px]">
            <span>2015</span>
            <span>19:00:30</span>
          </span>
          <span>{a.place}</span>
          <span>{a.what}</span>
          <span className={`flex h-[17px] w-[50px] items-center justify-center rounded-[5px] pb-px font-bold text-white ${a.tone} ${a.lift}`}>
            {a.level}
          </span>
        </div>
      ))}
    </div>
  );
}

export default function App() {
  return (
    <div className="flex h-[1100px] w-[1280px] overflow-hidden bg-[#ececec] font-['Noto_Sans_CJK_SC','Noto_Sans',sans-serif]">
      <Sidebar />
      <main className="flex w-[1079px] flex-col">
        <header className="relative -ml-[2px] flex h-[96px] w-[1081px] shrink-0 items-start justify-between border-b border-[#1575d6] bg-[linear-gradient(#2790ef_0px,#36a6ff_17px,#36a6ff_26px,#2d98f5_60px,#248cf0_95px)] pl-[21px]">
          <Logo />
          <div className="pt-[24px] pr-[20px]">
            <HeaderButtons />
          </div>
        </header>

        <Panel className="mt-[36px] ml-[30px] h-[742px] shrink-0">
          <div className="flex justify-center pt-[24px] pr-[17px]">
            <div className="flex h-[38px] w-[251px] rounded-[6px] bg-gradient-to-b from-[#ececec] to-[#dcdcdc] p-[3px] pt-[2px] text-[17px] leading-none">
              <div className="flex h-[33px] w-[122px] items-center justify-center rounded-l-[4px] bg-gradient-to-b from-[#2a92f3] to-[#38a3fb] pb-[1px] font-bold text-white shadow-[inset_0_1px_2px_#1468b8]">
                实时报警
              </div>
              <div className="flex h-[33px] w-[123px] items-center justify-center rounded-r-[4px] bg-gradient-to-b from-white to-[#f0f0f0] pr-[4px] pb-[3px] font-medium text-[#666] shadow-[1px_1px_1px_#8889] [-webkit-text-stroke:.3px]">
                历史报警
              </div>
            </div>
          </div>
          <div className="flex pt-[28px] pl-[54px]">
            <FloorPlan />
            <div className="flex flex-col pt-[28px]">
              <div className="ml-[80px]">
                <FloorStack />
              </div>
              <button className="mt-[25px] ml-[105px] flex h-[34px] w-[157px] shrink-0 items-center rounded-[6px] border-2 border-[#2b98f5] bg-white pb-[2px] pl-[15px] text-[16px] leading-none whitespace-nowrap text-[#3c93e2]">
                选择其他建筑楼
                <svg className="ml-[6px] h-[10px] w-[12px]" viewBox="0 0 12 10" fill="none" stroke="#2b8fe6" strokeWidth="2.600">
                  <path d="M1.500 2.500l4.300 4.300L10.100 2.500" />
                </svg>
              </button>
              <div className="pt-[286px]">
                <Legend />
              </div>
            </div>
          </div>
        </Panel>

        <Panel low className="mt-[23px] ml-[30px] h-[183px] shrink-0">
          <AlarmTable />
        </Panel>
      </main>
    </div>
  );
}
